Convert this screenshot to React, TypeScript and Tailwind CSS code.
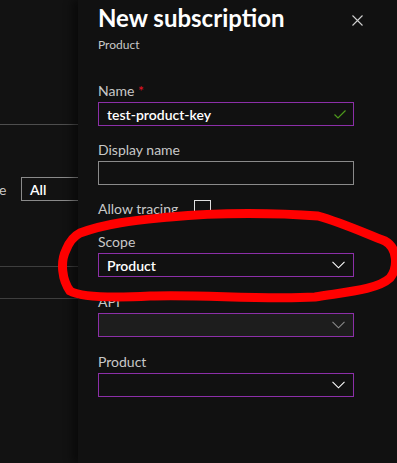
import React from "react";

const font = { fontFamily: 'Lato, "Open Sans", sans-serif' };

function Chevron({ color = "#ffffff" }: { color?: string }) {
  return (
    <svg width="13" height="8" viewBox="0 0 13 8" fill="none">
      <path d="M0.5 0.8 L6.5 6.8 L12.5 0.8" stroke={color} strokeWidth="1.1" />
    </svg>
  );
}

function Label({ children }: { children: React.ReactNode }) {
  return <div className="text-[14px] leading-[19px] text-[#c8c8c8]">{children}</div>;
}

function Select({ value, disabled, chevron }: { value?: string; disabled?: boolean; chevron: string }) {
  return (
    <div
      className={`mt-[2px] flex h-[24px] w-[256px] items-center justify-between border border-[#8c2fa8] pl-[8px] pr-[8px] ${
        disabled ? "bg-[#1d1d1d]" : "bg-[#111111]"
      }`}
    >
      <span className="text-[14px] font-semibold leading-[19px] text-white">{value}</span>
      <Chevron color={chevron} />
    </div>
  );
}

export default function App() {
  return (
    <div className="relative flex h-[463px] w-[397px] overflow-hidden bg-[#121212]" style={font}>
      {/* left background page */}
      <div className="relative w-[78px] shrink-0 overflow-hidden">
        <div className="mt-[124px] h-px w-full bg-[#4e4e4e]" />
        <div className="mt-[52px] flex h-[24px] items-center">
          <span className="ml-[-1px] w-[22px] shrink-0 text-[14px] text-[#c8c8c8]">e</span>
          <div className="flex h-[24px] w-[80px] shrink-0 items-center border border-[#8a8a8a] pl-[8px] text-[14px] font-semibold text-white">
            All
          </div>
        </div>
        <div className="mt-[65px] h-px w-full bg-[#3e3e3e]" />
        <div className="mt-[31px] h-px w-full bg-[#3e3e3e]" />
      </div>

      {/* panel */}
      <div className="relative flex-1 bg-[#111111] pl-[20px] shadow-[-6px_0_8px_rgba(0,0,0,0.45)]">
        <div className="flex items-start justify-between pr-[34px]">
          <div className="mt-[3px] text-[24px] font-bold leading-[30px] text-white">New subscription</div>
          <svg className="mt-[15px]" width="11" height="11" viewBox="0 0 11 11" fill="none">
            <path d="M0.5 0.5 L10.5 10.5 M10.5 0.5 L0.5 10.5" stroke="#d0d0d0" strokeWidth="1.1" />
          </svg>
        </div>
        <div className="mt-[4px] text-[12px] leading-[16px] text-[#c8c8c8]">Product</div>

        <div className="mt-[28px]">
          <Label>
            Name <span className="text-[#e81123]">*</span>
          </Label>
          <div className="mt-[2px] flex h-[24px] w-[256px] items-center justify-between border border-[#8c2fa8] pl-[8px] pr-[7px]">
            <span className="text-[14px] font-semibold leading-[19px] text-white">test-product-key</span>
            <svg width="12" height="9" viewBox="0 0 12 9" fill="none">
              <path d="M0.5 4.5 L4 8 L11.5 0.5" stroke="#4e9a1c" strokeWidth="1.2" />
            </svg>
          </div>
        </div>

        <div className="mt-[14px]">
          <Label>Display name</Label>
          <div className="mt-[2px] h-[24px] w-[256px] border border-[#8a8a8a]" />
        </div>

        <div className="mt-[14px] flex items-center">
          <Label>Allow tracing</Label>
          <div className="ml-[16px] h-[17px] w-[17px] border border-[#e0e0e0]" />
        </div>

        <div className="mt-[14px]">
          <Label>Scope</Label>
          <Select value="Product" chevron="#ffffff" />
        </div>

        <div className="mt-[15px]">
          <Label>API</Label>
          <Select disabled chevron="#8a8a8a" />
        </div>

        <div className="mt-[15px]">
          <Label>Product</Label>
          <Select chevron="#ffffff" />
        </div>
      </div>

      {/* red annotation */}
      <svg className="pointer-events-none absolute left-0 top-0" width="397" height="463" viewBox="0 0 397 463" fill="none">
        <path
          d="M80 233 C 110 222, 140 220, 170 217 C 220 212, 280 213, 318 216 C 340 222, 362 232, 385 241 C 398 248, 398 268, 390 278 C 377 290, 345 292, 315 297 C 260 300, 200 294, 150 296 C 110 298, 80 297, 70 291 C 62 280, 60 262, 66 250 C 70 240, 74 236, 80 233 Z"
          stroke="#ff0000"
          strokeWidth="9"
          strokeLinejoin="round"
          strokeLinecap="round"
        />
      </svg>
    </div>
  );
}
